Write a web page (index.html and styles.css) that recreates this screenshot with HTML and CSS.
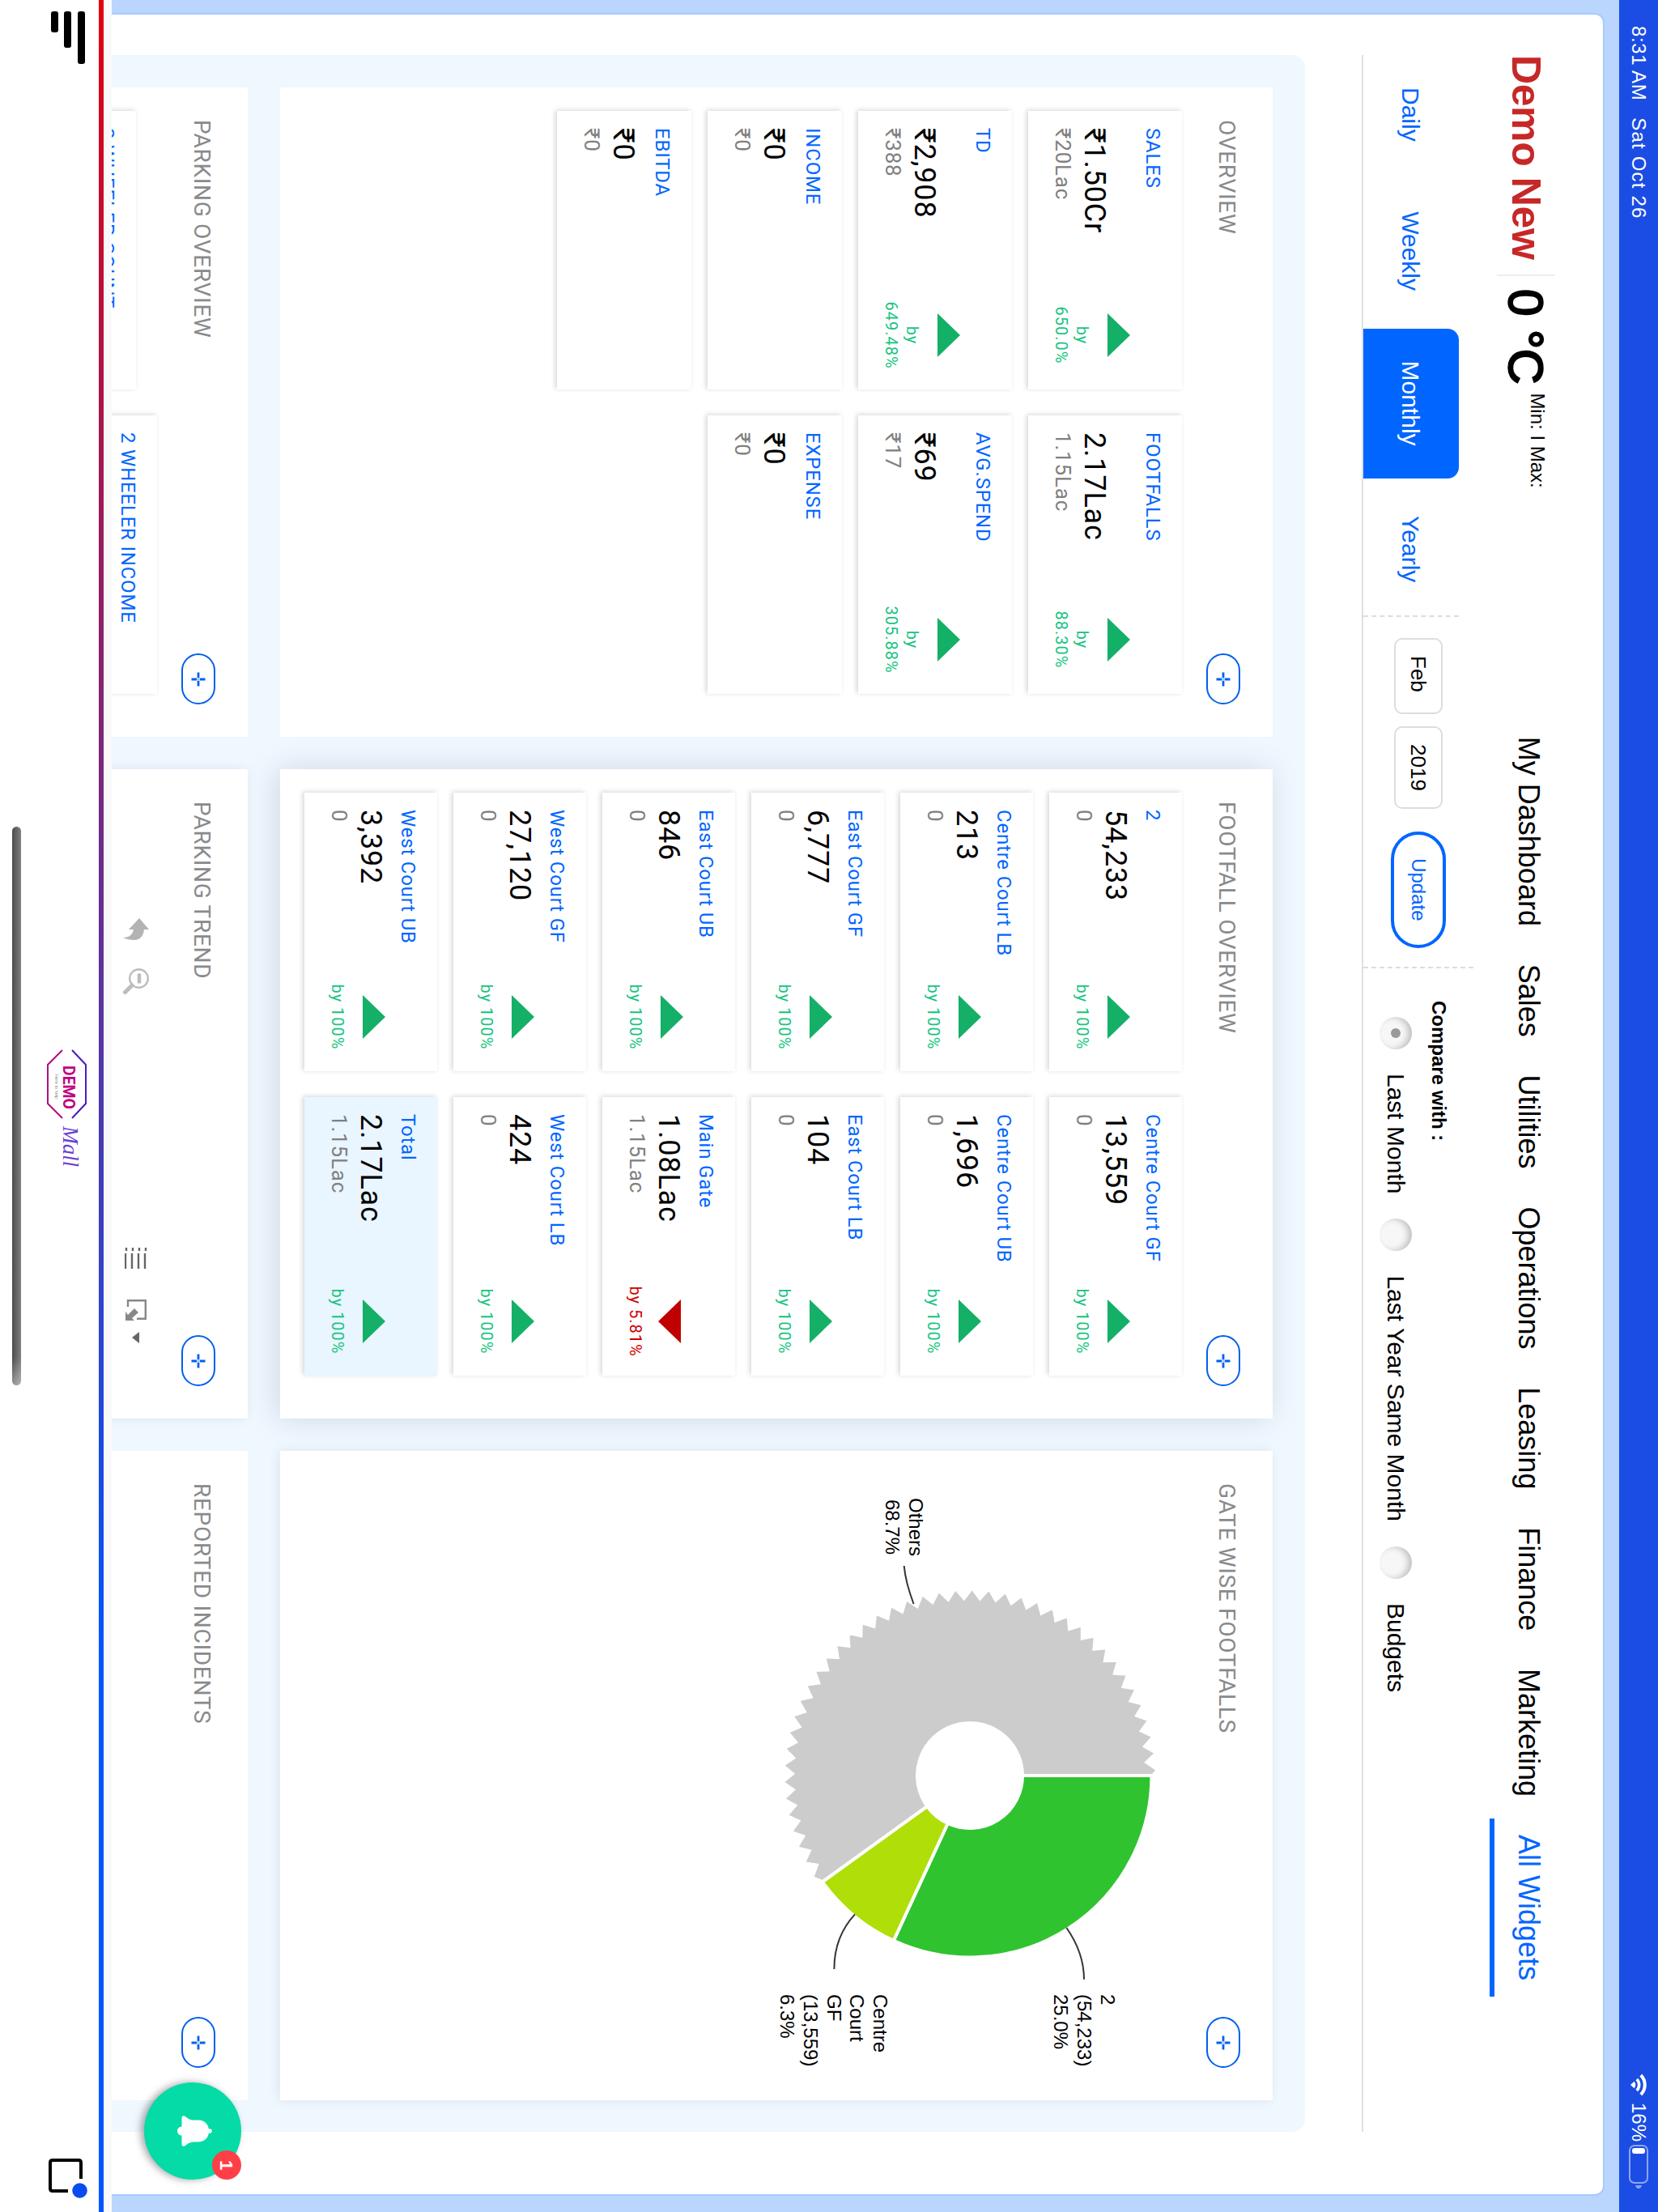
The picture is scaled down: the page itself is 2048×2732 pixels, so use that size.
FILE: index.html
```html
<!DOCTYPE html>
<html lang="en">
<head>
    <meta charset="utf-8">
    <title>Demo New - All Widgets</title>
    <link rel="stylesheet" href="styles.css">
</head>
<body>
    <!-- shared icons -->
    <svg class="defs">
        <symbol id="plus" viewBox="0 0 18 18">
            <path d="M9 .5v6.7M9 10.8v6.7M.5 9h6.7M10.8 9h6.7" stroke="#0060ee" stroke-width="2.8"/>
            <path d="M7.4 9h3.2M9 7.4v3.2" stroke="#8db8f8" stroke-width="1"/>
        </symbol>
    </svg>

    <div class="screen">
        <div class="status">
            <span class="time">8:31 AM</span>
            <span class="date">Sat Oct 26</span>
            <svg class="wifi" width="28" height="20" viewBox="0 0 28 20">
                <path d="M2 7.2a17 17 0 0 1 24 0" fill="none" stroke="#fff" stroke-width="4"/>
                <path d="M7 12.2a10 10 0 0 1 14 0" fill="none" stroke="#fff" stroke-width="3.6"/>
                <path d="M14 20l-4.2-4.6a6 6 0 0 1 8.4 0z" fill="#fff"/>
            </svg>
            <span class="percent">16%</span>
            <svg class="battery" width="56" height="24" viewBox="0 0 56 24">
                <rect x="1" y="1" width="46" height="22" rx="6" fill="none" stroke="#8da6f1" stroke-width="2"/>
                <rect x="4" y="4" width="7" height="16" rx="3" fill="#fff"/>
                <path d="M50 8q4 1 4 4t-4 4z" fill="#8da6f1"/>
            </svg>
        </div>

        <div class="frame">
            <div class="page">
                <div class="header">
                    <h1>Demo New</h1>
                    <div class="temp">0 °C</div>
                    <div class="minmax">Min: I Max:</div>
                    <div class="nav">
                        <a>My Dashboard</a>
                        <a>Sales</a>
                        <a>Utilities</a>
                        <a>Operations</a>
                        <a>Leasing</a>
                        <a>Finance</a>
                        <a>Marketing</a>
                        <a class="active">All Widgets</a>
                    </div>
                </div>

                <div class="filters">
                    <div class="tabs">
                        <a>Daily</a>
                        <a>Weekly</a>
                        <a class="active">Monthly</a>
                        <a>Yearly</a>
                    </div>
                    <div class="dates">
                        <span class="select month">Feb</span>
                        <span class="select">2019</span>
                        <span class="update">Update</span>
                    </div>
                    <div class="compare">
                        <b>Compare with :</b>
                        <div class="options">
                            <i class="radio checked"></i><span>Last Month</span>
                            <i class="radio"></i><span>Last Year Same Month</span>
                            <i class="radio"></i><span>Budgets</span>
                        </div>
                    </div>
                </div>

                <div class="board">
                    <div class="panel">
                        <div class="head"><h2>OVERVIEW</h2><span class="plus"><svg><use href="#plus"/></svg></span></div>
                        <div class="cards">
                            <div class="card tall">
                                <div class="info"><h3>SALES</h3><p class="value">₹1.50Cr</p><p class="last">₹20Lac</p></div>
                                <div class="change"><i class="up"></i>by<br>650.0%</div>
                            </div>
                            <div class="card tall">
                                <div class="info"><h3>FOOTFALLS</h3><p class="value">2.17Lac</p><p class="last">1.15Lac</p></div>
                                <div class="change"><i class="up"></i>by<br>88.30%</div>
                            </div>
                            <div class="card tall">
                                <div class="info"><h3>TD</h3><p class="value">₹2,908</p><p class="last">₹388</p></div>
                                <div class="change"><i class="up"></i>by<br>649.48%</div>
                            </div>
                            <div class="card tall">
                                <div class="info"><h3>AVG.SPEND</h3><p class="value">₹69</p><p class="last">₹17</p></div>
                                <div class="change"><i class="up"></i>by<br>305.88%</div>
                            </div>
                            <div class="card mid">
                                <div class="info"><h3>INCOME</h3><p class="value">₹0</p><p class="last">₹0</p></div>
                            </div>
                            <div class="card mid">
                                <div class="info"><h3>EXPENSE</h3><p class="value">₹0</p><p class="last">₹0</p></div>
                            </div>
                            <div class="card mid">
                                <div class="info"><h3>EBITDA</h3><p class="value">₹0</p><p class="last">₹0</p></div>
                            </div>
                        </div>
                    </div>

                    <div class="panel raised">
                        <div class="head"><h2>FOOTFALL OVERVIEW</h2><span class="plus"><svg><use href="#plus"/></svg></span></div>
                        <div class="cards">
                            <div class="card">
                                <div class="info"><h3>2</h3><p class="value">54,233</p><p class="last">0</p></div>
                                <div class="change"><i class="up"></i>by 100%</div>
                            </div>
                            <div class="card">
                                <div class="info"><h3>Centre Court GF</h3><p class="value">13,559</p><p class="last">0</p></div>
                                <div class="change"><i class="up"></i>by 100%</div>
                            </div>
                            <div class="card">
                                <div class="info"><h3>Centre Court LB</h3><p class="value">213</p><p class="last">0</p></div>
                                <div class="change"><i class="up"></i>by 100%</div>
                            </div>
                            <div class="card">
                                <div class="info"><h3>Centre Court UB</h3><p class="value">1,696</p><p class="last">0</p></div>
                                <div class="change"><i class="up"></i>by 100%</div>
                            </div>
                            <div class="card">
                                <div class="info"><h3>East Court GF</h3><p class="value">6,777</p><p class="last">0</p></div>
                                <div class="change"><i class="up"></i>by 100%</div>
                            </div>
                            <div class="card">
                                <div class="info"><h3>East Court LB</h3><p class="value">104</p><p class="last">0</p></div>
                                <div class="change"><i class="up"></i>by 100%</div>
                            </div>
                            <div class="card">
                                <div class="info"><h3>East Court UB</h3><p class="value">846</p><p class="last">0</p></div>
                                <div class="change"><i class="up"></i>by 100%</div>
                            </div>
                            <div class="card">
                                <div class="info"><h3>Main Gate</h3><p class="value">1.08Lac</p><p class="last">1.15Lac</p></div>
                                <div class="change minus"><i class="down"></i>by 5.81%</div>
                            </div>
                            <div class="card">
                                <div class="info"><h3>West Court GF</h3><p class="value">27,120</p><p class="last">0</p></div>
                                <div class="change"><i class="up"></i>by 100%</div>
                            </div>
                            <div class="card">
                                <div class="info"><h3>West Court LB</h3><p class="value">424</p><p class="last">0</p></div>
                                <div class="change"><i class="up"></i>by 100%</div>
                            </div>
                            <div class="card">
                                <div class="info"><h3>West Court UB</h3><p class="value">3,392</p><p class="last">0</p></div>
                                <div class="change"><i class="up"></i>by 100%</div>
                            </div>
                            <div class="card total">
                                <div class="info"><h3>Total</h3><p class="value">2.17Lac</p><p class="last">1.15Lac</p></div>
                                <div class="change"><i class="up"></i>by 100%</div>
                            </div>
                        </div>
                    </div>

                    <div class="panel soft">
                        <div class="head"><h2>GATE WISE FOOTFALLS</h2><span class="plus"><svg><use href="#plus"/></svg></span></div>
                        <svg class="pie" width="802" height="620" viewBox="0 0 802 620">
                            <path id="others" fill="#ccc"/>
                            <path id="gate2" fill="#30c330"/>
                            <path id="centre" fill="#b0de09"/>
                            <g fill="none" stroke="#333" stroke-width="2">
                                <path d="M142 343.3Q162 341.5 189 331.4"/>
                                <path d="M589 142.6Q620 121 652.7 121"/>
                                <path d="M572.4 404Q600 429.6 640 429.6"/>
                            </g>
                            <g text-anchor="middle">
                                <text x="94" y="337">Others</text>
                                <text x="94" y="366">68.7%</text>
                            </g>
                            <text x="671" y="100">2</text>
                            <text x="671" y="129">(54,233)</text>
                            <text x="671" y="158">25.0%</text>
                            <text x="671" y="381">Centre</text>
                            <text x="671" y="410">Court</text>
                            <text x="671" y="438">GF</text>
                            <text x="671" y="467">(13,559)</text>
                            <text x="671" y="496">6.3%</text>
                        </svg>
                    </div>

                    <div class="panel">
                        <div class="head"><h2>PARKING OVERVIEW</h2><span class="plus"><svg><use href="#plus"/></svg></span></div>
                        <div class="cards">
                            <div class="card lower">
                                <div class="info"><h3>2 WHEELER COUNT</h3></div>
                            </div>
                            <div class="card">
                                <div class="info"><h3>2 WHEELER INCOME</h3></div>
                            </div>
                        </div>
                    </div>

                    <div class="panel soft">
                        <div class="head"><h2>PARKING TREND</h2><span class="plus"><svg><use href="#plus"/></svg></span></div>
                        <div class="tools">
                            <svg width="28" height="32" viewBox="0 0 28 32">
                                <path d="M0 12L14 0v6c8 1 13 5 13 12 0 5-1 10-3 14 0-8-4-12-10-13v6z" fill="#b3b3b3"/>
                            </svg>
                            <svg width="32" height="32" viewBox="0 0 32 32" fill="none" stroke="#bdbdbd">
                                <circle cx="12.500" cy="12.500" r="11.300" stroke-width="2.400"/>
                                <path d="M6.500 12h12" stroke-width="4.500"/>
                                <path d="M21 21l8.500 8.500" stroke-width="5" stroke-linecap="round"/>
                            </svg>
                            <svg class="list" width="26" height="28" viewBox="0 0 26 28" stroke="#666" stroke-width="2.400">
                                <path d="M0 2h4M0 10h4M0 18h4M0 26h4M7 3h19M7 11h19M7 19h19M7 27h19"/>
                            </svg>
                            <svg width="26" height="26" viewBox="0 0 26 26" fill="none" stroke="#888" stroke-width="2.400">
                                <path d="M9 23H1.200V1.200h22.600V12"/>
                                <path d="M26 26H15l4-3-8-8 5-5 7 8 3-3z" fill="#888" stroke="none"/>
                            </svg>
                            <svg class="caret" width="14" height="9" viewBox="0 0 14 9"><path d="M0 0h14l-7 9z" fill="#666"/></svg>
                        </div>
                    </div>

                    <div class="panel">
                        <div class="head"><h2>REPORTED INCIDENTS</h2><span class="plus"><svg><use href="#plus"/></svg></span></div>
                    </div>
                </div>
            </div>
        </div>

        <div class="footer">
            <div class="bars"><span></span><span></span><span></span></div>
            <svg class="logo" width="150" height="52" viewBox="0 0 150 52">
                <path d="M1 19L19 2h48l18 17" fill="none" stroke="#4a1cbe" stroke-width="2"/>
                <path d="M1 31l18 18h48l18-18" fill="none" stroke="#b0107f" stroke-width="2"/>
                <text class="demo" x="20" y="30" textLength="54" lengthAdjust="spacingAndGlyphs">DEMO</text>
                <text class="tiny" x="31" y="40" textLength="30" lengthAdjust="spacingAndGlyphs">Here to help</text>
                <text class="mall" x="95" y="30" textLength="50" lengthAdjust="spacingAndGlyphs">Mall</text>
            </svg>
            <svg class="window" width="52" height="50" viewBox="0 0 52 50">
                <path d="M27 8H7q-3 0-3 3v32q0 3 3 3h32q3 0 3-3V24" fill="none" stroke="#000" stroke-width="4"/>
                <circle cx="41.500" cy="9.500" r="9.300" fill="#0a4bf0"/>
            </svg>
            <div class="home-bar"></div>
        </div>

        <div class="bell">
            <svg width="38" height="43" viewBox="0 0 38 43" fill="#fff">
                <circle cx="19" cy="3" r="2.800"/>
                <path d="M19 4C10 4 5.500 10 5.500 17c0 7 .5 10-4 15.500C-.5 35 0 37.500 3 37.500h10.500a5.500 5.500 0 0 0 11 0H35c3 0 3.500-2.500 1.500-5C32 27 32.500 24 32.500 17 32.500 10 28 4 19 4z"/>
            </svg>
            <span class="badge">1</span>
        </div>
    </div>

    <script>
        // Donut chart, angles in degrees clockwise from the top
        var cx = 401, cy = 262, inner = 65, outer = 224.5;

        function point(r, deg) {
            var a = deg * Math.PI / 180;
            return (cx + r * Math.sin(a)).toFixed(2) + ' ' + (cy - r * Math.cos(a)).toFixed(2);
        }

        function slice(from, to) {
            return 'M' + point(inner, from) + 'L' + point(outer, from) +
                'A' + outer + ' ' + outer + ' 0 0 1 ' + point(outer, to) +
                'L' + point(inner, to) + 'A' + inner + ' ' + inner + ' 0 0 0 ' + point(inner, from) + 'Z';
        }

        // "Others" has a saw edge
        function sawSlice(from, to) {
            var d = 'M' + point(inner, to) + 'L' + point(226, to);
            for (var k = 0; k < 42; k++) {
                d += 'L' + point(232, to - 1.75 - 5.15 * k);
                if (k < 41) d += 'L' + point(219, to - 4.33 - 5.15 * k);
            }
            return d + 'L' + point(224, from) + 'L' + point(inner, from) +
                'A' + inner + ' ' + inner + ' 0 1 1 ' + point(inner, to) + 'Z';
        }

        document.getElementById('gate2').setAttribute('d', slice(0, 114.8));
        document.getElementById('centre').setAttribute('d', slice(114.8, 144.2));
        document.getElementById('others').setAttribute('d', sawSlice(144.2, 360));
    </script>
</body>
</html>
```
FILE: styles.css
```css
* {
    box-sizing: border-box;
}
html {
    overflow: hidden;
}
body {
    position: relative;
    margin: 0;
    width: 2048px;
    height: 2732px;
    overflow: hidden;
    background: #fff;
    font-family: "Liberation Sans", Arial, sans-serif;
}
h1, h2, h3, p {
    margin: 0;
    font-weight: normal;
}
svg {
    display: block;
}
.defs {
    display: none;
}

/* landscape screen turned on its side */
.screen {
    position: relative;
    display: flex;
    flex-direction: column;
    width: 2732px;
    height: 2048px;
    overflow: hidden;
    transform-origin: 0 0;
    transform: rotate(90deg) translateY(-100%);
}

/* Status bar */
.status {
    display: flex;
    align-items: center;
    height: 48px;
    padding: 0 27px 0 32px;
    background: #1b4de4;
    color: #fff;
    font-size: 24px;
    letter-spacing: 0.6px;
    white-space: nowrap;
}
.date {
    margin-left: 21px;
    letter-spacing: 1.2px;
}
.wifi {
    margin-left: auto;
}
.percent {
    margin-left: 8px;
    margin-right: 4px;
    letter-spacing: 0;
}

/* Page */
.frame {
    height: 1862px;
    padding: 18px 20px 0 16px;
    background: #bad6ff;
    overflow: hidden;
}
.page {
    height: 2400px;
    padding: 59px 77px 0 50px;
    background: #fff;
    border: 2px solid #a6caff;
    border-radius: 12px 12px 0 0;
}
.header {
    display: flex;
    align-items: flex-start;
    height: 101px;
    white-space: nowrap;
}
.header h1 {
    width: 273px;
    height: 72px;
    border-right: 2px solid #eee;
    color: #c62828;
    font-size: 50px;
    font-weight: bold;
    letter-spacing: -0.4px;
    line-height: 73px;
}
.temp {
    margin-left: 16px;
    font-size: 60px;
    line-height: 74px;
    -webkit-text-stroke: 2.4px #000;
}
.minmax {
    margin-left: 11px;
    font-size: 24px;
    line-height: 43px;
}
.nav {
    display: flex;
    gap: 6.8px;
    margin-left: auto;
    margin-right: 167px;
}
.nav a {
    height: 81px;
    padding: 0 20px;
    font-size: 36px;
    line-height: 65px;
}
.nav .active {
    color: #06f;
    border-bottom: 6px solid #06f;
}

/* Filters */
.filters {
    display: flex;
    align-items: flex-end;
    height: 138px;
    border-bottom: 2px solid #e0e0e0;
    white-space: nowrap;
}
.tabs {
    display: flex;
    gap: 6.5px;
    width: 694px;
    height: 118px;
    border-right: 2px dashed #ddd;
}
.tabs a {
    padding: 0 40px;
    color: #06f;
    font-size: 30px;
    line-height: 119px;
}
.tabs .active {
    background: #06f;
    color: #fff;
    border-radius: 14px 14px 0 0;
}
.dates {
    display: flex;
    align-items: center;
    width: 434px;
    height: 136px;
    padding: 0 0 0 26px;
    border-right: 2px dashed #ddd;
}
.select {
    height: 60px;
    margin-right: 15px;
    padding: 0 20px;
    border: 2px solid #ddd;
    border-radius: 10px;
    font-size: 26px;
    line-height: 57px;
}
.month {
    width: 94px;
}
.update {
    width: 144px;
    height: 68px;
    margin-left: 13px;
    border: 4px solid #06f;
    border-radius: 34px;
    color: #06f;
    font-size: 24px;
    line-height: 60px;
    text-align: center;
}
.compare {
    height: 136px;
    padding: 28px 0 0 40px;
    font-size: 24px;
    line-height: 30px;
}
.options {
    display: flex;
    align-items: center;
    margin-top: 18px;
    font-size: 30px;
    line-height: 40px;
}
.options span {
    margin: 0 31px 0 30px;
}
.radio {
    display: flex;
    align-items: center;
    justify-content: center;
    width: 40px;
    height: 40px;
    border-radius: 50%;
    background: #f7f7f7;
    box-shadow: inset 0 5px 8px -1px rgba(0, 0, 0, 0.24);
}
.options .radio:first-child {
    margin-left: 20px;
}
.checked::after {
    content: "";
    width: 12px;
    height: 12px;
    border-radius: 50%;
    background: #999;
}

/* Widgets */
.board {
    display: grid;
    grid-template-columns: repeat(3, 802px);
    grid-template-rows: 1226px 1226px;
    gap: 40px;
    margin-top: 70px;
    padding: 40px;
    background: #eff7ff;
    border-radius: 16px;
    font-family: Roboto, sans-serif;
}
.panel {
    background: #fff;
}
.raised {
    position: relative;
    box-shadow: 0 4px 36px rgba(0, 30, 50, 0.13);
}
.soft {
    box-shadow: 0 2px 14px rgba(0, 30, 50, 0.08);
}
.head {
    display: flex;
    justify-content: space-between;
    height: 112px;
    padding: 40px 40px 0 40px;
}
.head h2 {
    color: #8a8a8a;
    font-size: 28px;
    letter-spacing: 0.7px;
    line-height: 33px;
}
.plus {
    display: flex;
    align-items: center;
    justify-content: center;
    width: 63px;
    height: 42px;
    border: 2px solid #0060ee;
    border-radius: 21px;
}
.plus svg {
    width: 18px;
    height: 18px;
}
.cards {
    display: flex;
    flex-wrap: wrap;
    gap: 20px 32px;
    padding-left: 29px;
}
.card {
    display: flex;
    justify-content: space-between;
    width: 344px;
    height: 164px;
    padding-left: 21px;
    background: #fff;
    box-shadow: -1px 2px 6px rgba(0, 0, 0, 0.17);
    letter-spacing: 0.8px;
    white-space: nowrap;
}
.tall {
    height: 190px;
}
.mid {
    height: 166px;
}
.total {
    background: #e9f5ff;
}
.lower {
    margin-top: 26px;
}
.info {
    display: flex;
    flex-direction: column;
    padding: 22px 0 28px;
}
.info h3 {
    margin-bottom: auto;
    color: #06f;
    font-size: 24px;
    line-height: 28px;
}
.value {
    margin-bottom: 3px;
    font-size: 36px;
    line-height: 42px;
}
.last {
    color: #808080;
    font-size: 26px;
    line-height: 30px;
}
.change {
    width: 134px;
    padding-top: 64px;
    color: #16c47f;
    font-size: 20px;
    letter-spacing: 1px;
    line-height: 26px;
    text-align: center;
}
.minus {
    color: #d00000;
}
.up, .down {
    display: block;
    width: 54px;
    height: 28px;
    margin: 0 auto 18px;
    background: #14b067;
    clip-path: polygon(50% 0, 100% 100%, 0 100%);
}
.down {
    margin-top: 3px;
    margin-bottom: 15px;
    background: #c00000;
    clip-path: polygon(0 0, 100% 0, 50% 100%);
}
.pie > path {
    stroke: #fff;
    stroke-width: 4px;
}
.pie text {
    font-family: "Liberation Sans", Arial, sans-serif;
    font-size: 24px;
}
.tools {
    display: flex;
    align-items: center;
    padding: 10px 93px 0 184px;
}
.tools svg + svg {
    margin-left: 34px;
}
.tools .list {
    margin-left: auto;
}
.tools .list + svg {
    margin-left: 38px;
}
.tools .caret {
    margin-left: 14px;
}

/* Footer */
.footer {
    position: relative;
    display: flex;
    align-items: flex-start;
    height: 138px;
    padding: 30px 16px 0 14px;
    background: linear-gradient(#f9f9f9 10px, transparent 10px, transparent 16px, #fff 16px),
        linear-gradient(90deg, #e2000f, #0055ff 75%);
}
.bars {
    width: 150px;
    padding-top: 3px;
}
.bars span {
    display: block;
    width: 65px;
    height: 9px;
    margin-bottom: 7.5px;
    background: #000;
    border-radius: 3px;
}
.bars span:nth-child(2) {
    width: 45px;
}
.bars span:nth-child(3) {
    width: 26px;
}
.logo {
    margin-left: 1132px;
}
.demo {
    fill: #c00080;
    font: bold 20px Roboto, sans-serif;
}
.tiny {
    fill: #888;
    font-size: 6px;
}
.mall {
    fill: #6a3fd0;
    font: italic 27px "Liberation Serif", cursive;
}
.window {
    margin-left: auto;
}
.home-bar {
    position: absolute;
    left: 1021px;
    bottom: 15px;
    width: 690px;
    height: 11px;
    border-radius: 6px;
    background: linear-gradient(90deg, transparent 95%, rgba(255, 255, 255, 0.4)),
        linear-gradient(#808080, #4a4c4c);
}

/* Notifications */
.bell {
    position: absolute;
    left: 2572px;
    top: 1750px;
    display: flex;
    justify-content: center;
    width: 120px;
    height: 120px;
    padding-top: 36px;
    border-radius: 50%;
    background: #05dba7;
    box-shadow: 0 4px 10px rgba(0, 0, 0, 0.35);
}
.badge {
    position: absolute;
    right: 0;
    top: 0;
    width: 36px;
    height: 36px;
    border-radius: 50%;
    background: #ff3f46;
    color: #fff;
    font: bold 22px/37px "Liberation Sans", Arial, sans-serif;
    text-align: center;
}
```
